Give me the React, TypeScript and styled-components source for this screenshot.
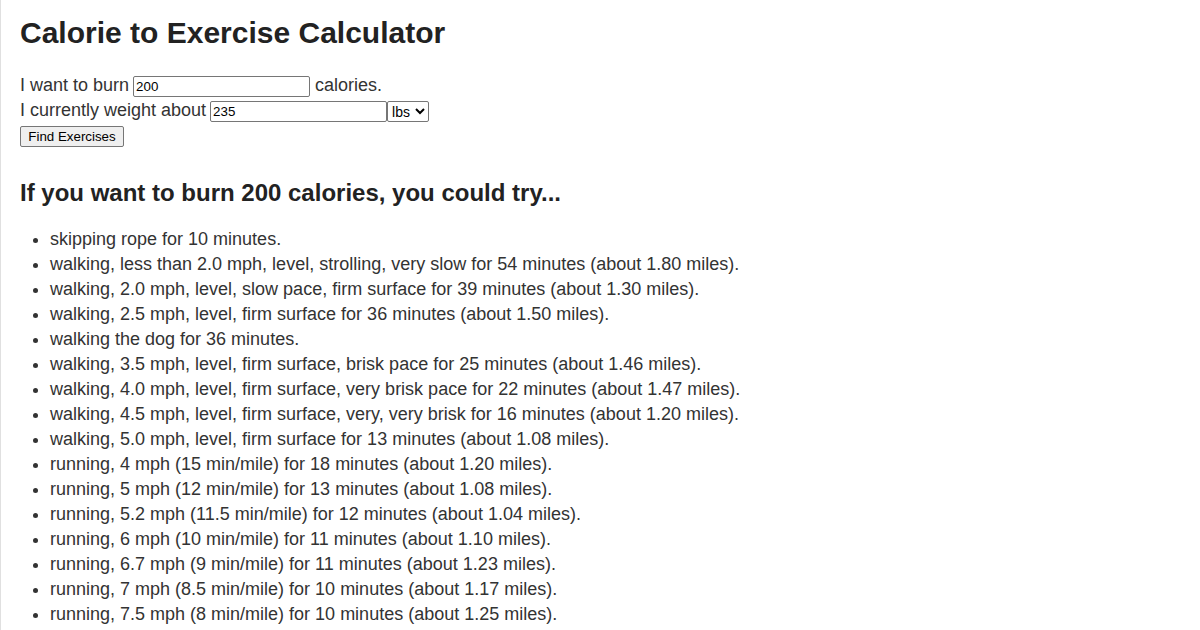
import React from "react";
import styled, { createGlobalStyle } from "styled-components";

const Global = createGlobalStyle`
  html, body { margin: 0; padding: 0; background: #fff; }
  body { font-family: "Liberation Sans", Arial, sans-serif; color: #333; }
`;

const Page = styled.div`
  border-left: 1px solid #e0e0e0;
  height: 630px;
  overflow: hidden;
  box-sizing: border-box;
  padding: 0 19px;
  font-size: 18px;
  line-height: 25px;
`;

const Title = styled.h1`
  margin: 0;
  padding-top: 13px;
  font-size: 30px;
  line-height: 40px;
  font-weight: bold;
  color: #222;
`;

const Form = styled.form`
  margin-top: 20px;
`;

const Line = styled.div`
  display: flex;
  align-items: center;
  height: 25px;
  white-space: pre;
`;

const Input = styled.input`
  box-sizing: border-box;
  width: 177px;
  height: 21px;
  margin: 2px 5px 0 4px;
  padding: 1px 2px;
  border: 1px solid #767676;
  border-radius: 2px;
  font: 13.33px "Liberation Sans", Arial, sans-serif;
  color: #000;
`;

const Select = styled.select`
  box-sizing: border-box;
  width: 42px;
  height: 21px;
  margin: 2px 0 0 -5px;
  border: 1px solid #767676;
  border-radius: 2px;
  font: 14px "Liberation Sans", Arial, sans-serif;
  color: #000;
  background: #fff;
`;

const Button = styled.button`
  box-sizing: border-box;
  width: 104px;
  height: 21px;
  margin-top: 2px;
  padding: 1px 6px;
  border: 1px solid #767676;
  border-radius: 2px;
  background: #efefef;
  font: 13.33px "Liberation Sans", Arial, sans-serif;
  color: #000;
`;

const Heading = styled.h2`
  margin: 30px 0 0;
  font-size: 24px;
  line-height: 30px;
  font-weight: bold;
  color: #222;
`;

const List = styled.ul`
  margin: 19px 0 0;
  padding-left: 30px;
`;

const Item = styled.li`
  line-height: 25px;
`;

const items = [
  "skipping rope for 10 minutes.",
  "walking, less than 2.0 mph, level, strolling, very slow for 54 minutes (about 1.80 miles).",
  "walking, 2.0 mph, level, slow pace, firm surface for 39 minutes (about 1.30 miles).",
  "walking, 2.5 mph, level, firm surface for 36 minutes (about 1.50 miles).",
  "walking the dog for 36 minutes.",
  "walking, 3.5 mph, level, firm surface, brisk pace for 25 minutes (about 1.46 miles).",
  "walking, 4.0 mph, level, firm surface, very brisk pace for 22 minutes (about 1.47 miles).",
  "walking, 4.5 mph, level, firm surface, very, very brisk for 16 minutes (about 1.20 miles).",
  "walking, 5.0 mph, level, firm surface for 13 minutes (about 1.08 miles).",
  "running, 4 mph (15 min/mile) for 18 minutes (about 1.20 miles).",
  "running, 5 mph (12 min/mile) for 13 minutes (about 1.08 miles).",
  "running, 5.2 mph (11.5 min/mile) for 12 minutes (about 1.04 miles).",
  "running, 6 mph (10 min/mile) for 11 minutes (about 1.10 miles).",
  "running, 6.7 mph (9 min/mile) for 11 minutes (about 1.23 miles).",
  "running, 7 mph (8.5 min/mile) for 10 minutes (about 1.17 miles).",
  "running, 7.5 mph (8 min/mile) for 10 minutes (about 1.25 miles).",
];

export default function App() {
  return (
    <>
      <Global />
      <Page>
        <Title>Calorie to Exercise Calculator</Title>
        <Form onSubmit={(e) => e.preventDefault()}>
          <Line>
            I want to burn<Input defaultValue="200" />calories.
          </Line>
          <Line>
            I currently weight about<Input defaultValue="235" />
            <Select defaultValue="lbs">
              <option value="lbs">lbs</option>
              <option value="kg">kg</option>
            </Select>
          </Line>
          <Line>
            <Button type="submit">Find Exercises</Button>
          </Line>
        </Form>
        <Heading>If you want to burn 200 calories, you could try...</Heading>
        <List>
          {items.map((t) => (
            <Item key={t}>{t}</Item>
          ))}
        </List>
      </Page>
    </>
  );
}
